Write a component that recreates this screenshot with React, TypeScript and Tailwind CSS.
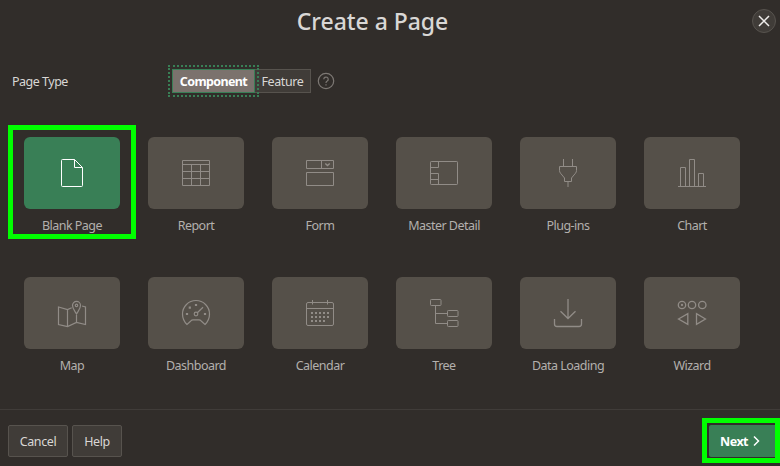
import type { ReactNode } from "react";

type PageKind = {
  label: string;
  icon: ReactNode;
};

const topRow: PageKind[] = [
  {
    label: "Blank Page",
    icon: (
      <>
        <path d="M6.5 2.5H18.5L26.5 10.5V28.5Q26.5 29.5 25.5 29.5H6.5Q5.5 29.5 5.5 28.5V3.5Q5.5 2.5 6.5 2.5Z" />
        <path d="M18.5 2.5V10.5H26.5" />
      </>
    ),
  },
  {
    label: "Report",
    icon: <path d="M2.5 3.5H29.5V28.5H2.5ZM2.5 7.5H29.5M2.5 14.5H29.5M2.5 21.5H29.5M11.5 7.5V28.5M20.5 7.5V28.5" />,
  },
  {
    label: "Form",
    icon: (
      <>
        <path d="M2.5 3.5H29.5V11.5H2.5ZM17.5 3.5V11.5M2.5 15.5H29.5V28.5H2.5Z" />
        <path strokeWidth="1.4" d="M21.3 6.4L23.5 8.6L25.7 6.4" />
      </>
    ),
  },
  {
    label: "Master Detail",
    icon: (
      <>
        <rect x="2.5" y="4.5" width="27" height="23" rx="0.7" />
        <path d="M2.5 10.5H10.5V4.5M2.5 16.5H10.5V27.5M2.5 22.5H10.5" />
      </>
    ),
  },
  {
    label: "Plug-ins",
    icon: <path d="M11.5 2V9.5M20.5 2V9.5M7.5 9.5H24.5V13.5Q24.5 15 23.5 16.2L19.5 21V24.5H12.5V21L8.5 16.2Q7.5 15 7.5 13.5ZM16 24.5V30" />,
  },
  {
    label: "Chart",
    icon: <path d="M2 29.5H30M4.5 29.5V10.5H9.5V29.5M13.5 29.5V2.5H18.5V29.5M22.5 29.5V16.5H27.5V29.5" />,
  },
];

const bottomRow: PageKind[] = [
  {
    label: "Map",
    icon: (
      <g strokeWidth="1.2">
        <path d="M15.7 10.8L11.5 12.5L2.5 10V27.5L11.5 29.5L20.5 25.5L29.5 27.5V10L26 9M11.5 12.5V29.5M20.5 18V25.5" />
        <path d="M20.5 17C18.8 14 16.5 11.4 16.5 8.4A4 4 0 0 1 24.5 8.4C24.5 11.4 22.2 14 20.5 17Z" />
        <circle cx="20.5" cy="8.4" r="1.2" />
      </g>
    ),
  },
  {
    label: "Dashboard",
    icon: (
      <g strokeWidth="1.2">
        <path d="M7 27.5C4.2 24.8 2.5 21.2 2.5 17A13.5 13.5 0 0 1 29.5 17C29.5 21.2 27.8 24.8 25 27.5L21.2 24Q20.3 22.8 19 22.8H13Q11.7 22.8 10.8 24Z" />
        <circle cx="16" cy="17" r="1.8" />
        <path d="M17.3 15.8L23 10.3" />
        <path d="M6.5 16.5h1v1h-1zM9.3 10.2h1v1h-1zM15.5 7.5h1v1h-1zM24.5 16.5h1v1h-1z" />
      </g>
    ),
  },
  {
    label: "Calendar",
    icon: (
      <>
        <rect x="2.5" y="5.5" width="27" height="23" rx="1.5" />
        <path d="M2.5 11.5H29.5M8.5 3V7.5M23.5 3V7.5" />
        <path strokeWidth="2" d="M7 16h2m2 0h2m2 0h2m2 0h2m2 0h2M7 20h2m2 0h2m2 0h2m2 0h2m2 0h2M7 24h2m2 0h2m2 0h2m2 0h2" />
      </>
    ),
  },
  {
    label: "Tree",
    icon: (
      <>
        <rect x="2.5" y="2.5" width="10.5" height="6" rx="0.8" />
        <rect x="19.5" y="13.5" width="10.5" height="6" rx="0.8" />
        <rect x="19.5" y="23.5" width="10.5" height="6" rx="0.8" />
        <path d="M7.5 8.5V26.5H19.5M7.5 16.5H19.5" />
      </>
    ),
  },
  {
    label: "Data Loading",
    icon: (
      <path
        strokeWidth="1.3"
        d="M16 2V21.3M8.5 14.2L16 21.5L23.5 14.2M2.5 22V27Q2.5 29.5 5 29.5H27Q29.5 29.5 29.5 27V22"
      />
    ),
  },
  {
    label: "Wizard",
    icon: (
      <g strokeWidth="1.3">
        <circle cx="6" cy="8" r="3.7" />
        <circle cx="16" cy="8" r="3.7" />
        <circle cx="26.3" cy="8" r="3.7" />
        <circle cx="6" cy="8" r="0.5" />
        <path d="M2.5 22L11.8 16.7V27.3ZM29.5 22L20.5 16.7V27.3Z" />
      </g>
    ),
  },
];

function Tile({ kind, selected = false }: { kind: PageKind; selected?: boolean }) {
  return (
    <button className="relative flex w-24 flex-col items-center">
      {selected && <span className="absolute -top-3 -left-4 h-[114px] w-32 border-[5px] border-[#00ff00]" />}
      <span
        className={
          selected
            ? "flex h-[72px] w-24 items-center justify-center rounded-md bg-[#397f56] text-white"
            : "flex h-[72px] w-24 items-center justify-center rounded-md bg-[#555049] text-[#918c87]"
        }
      >
        <svg width="32" height="32" viewBox="0 0 32 32" fill="none" stroke="currentColor">
          {kind.icon}
        </svg>
      </span>
      <span className="mt-2 mb-px text-[12.5px] leading-[17px] tracking-[-0.52px] whitespace-nowrap text-[#b3b0ad]">{kind.label}</span>
    </button>
  );
}

export default function App() {
  return (
    <div className="flex h-[466px] w-[780px] flex-col overflow-hidden bg-[#312d2a] font-['Noto_Sans',sans-serif] text-[#d9d7d5]">
      <header className="flex h-[42px] shrink-0 items-center pr-1">
        <h1 className="grow pr-[7px] text-center text-[23px] leading-[42px] font-medium tracking-[-0.05px]">Create a Page</h1>
        <button className="flex size-6 items-center justify-center rounded-full border border-[#57534e] bg-[#403c38] text-[#efedeb]">
          <svg width="12" height="12" viewBox="0 0 12 12" fill="none" stroke="currentColor" strokeWidth="1.5">
            <path d="M1 1L11 11M11 1L1 11" />
          </svg>
        </button>
      </header>

      <main className="flex grow flex-col">
        <div className="mt-[23px] flex h-8 items-center pl-3">
          <span className="w-40 pt-px text-[12.5px] leading-[17px] tracking-[-0.5px]">Page Type</span>
          <div className="flex h-6 text-[12.5px] leading-[17px]">
            <button className="relative flex w-[83px] items-center justify-center border border-[#397f56] bg-[#7b726d] pt-px font-bold tracking-[-0.62px] text-white">
              Component
              <span className="absolute -inset-[5px] border-2 border-dotted border-[#397f56]" />
            </button>
            <button className="flex w-14 items-center justify-center border border-l-0 border-[#57534e] bg-[#403c38] pt-px tracking-[-0.4px]">Feature</button>
          </div>
          <svg className="ml-1.5" width="18" height="18" viewBox="0 0 18 18" fill="none" stroke="#7d7874" strokeWidth="1.2">
            <circle cx="9" cy="9" r="7.7" />
            <path d="M6.8 7.3A2.2 2.2 0 1 1 10.2 9.1Q9 9.8 9 11M9 12.2V13.4" />
          </svg>
        </div>

        <div className="mt-10 flex gap-7 pl-6">
          {topRow.map((kind, i) => (
            <Tile key={kind.label} kind={kind} selected={i === 0} />
          ))}
        </div>
        <div className="mt-[42px] flex gap-7 pl-6">
          {bottomRow.map((kind) => (
            <Tile key={kind.label} kind={kind} />
          ))}
        </div>
      </main>

      <footer className="flex h-[57px] shrink-0 items-start border-t border-[#403c39] pt-[15px] pl-2 text-[12.5px] leading-[17px]">
        <button className="h-8 w-[60px] rounded-xs border border-[#57534e] bg-[#403c38] pt-px tracking-[-0.4px]">Cancel</button>
        <button className="ml-1 h-8 w-[50px] rounded-xs border border-[#57534e] bg-[#403c38] pt-px tracking-[-0.4px]">Help</button>
        <div className="-mt-[7px] ml-auto flex h-[45px] w-[78px] border-[5px] border-[#00ff00] pt-0.5 pl-0.5">
          <button className="flex h-8 w-[66px] items-center rounded-l-xs bg-[#397f56] pl-[11px] font-bold text-white">
            <span className="w-[28px] pt-px tracking-[-0.5px]">Next</span>
            <svg className="ml-[5px]" width="7" height="12" viewBox="0 0 7 12" fill="none" stroke="currentColor" strokeWidth="1.5">
              <path d="M1 1.5L5.5 6L1 10.5" />
            </svg>
          </button>
        </div>
      </footer>
    </div>
  );
}
